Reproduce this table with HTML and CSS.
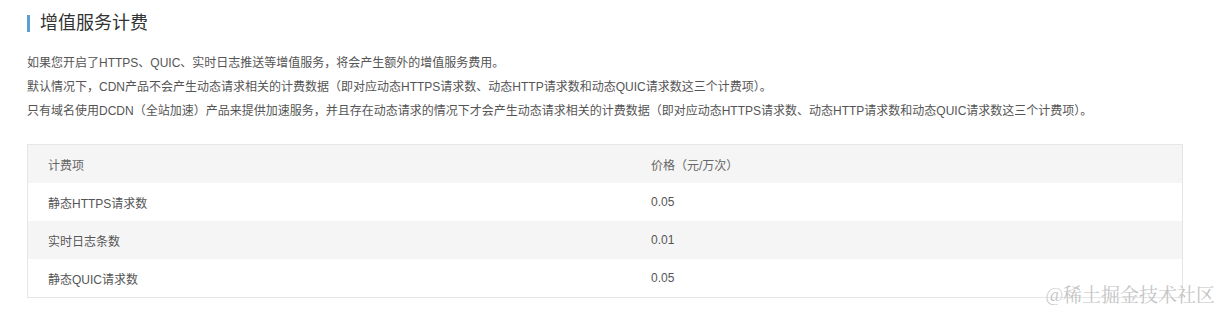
FILE: index.html
```html
<!DOCTYPE html>
<html lang="zh">
<head>
<meta charset="utf-8">
<link rel="stylesheet" href="styles.css">
</head>
<body>
<div class="page">
  <h2 class="title">增值服务计费</h2>
  <div class="desc">
    <p>如果您开启了HTTPS、QUIC、实时日志推送等增值服务，将会产生额外的增值服务费用。</p>
    <p>默认情况下，CDN产品不会产生动态请求相关的计费数据（即对应动态HTTPS请求数、动态HTTP请求数和动态QUIC请求数这三个计费项）。</p>
    <p>只有域名使用DCDN（全站加速）产品来提供加速服务，并且存在动态请求的情况下才会产生动态请求相关的计费数据（即对应动态HTTPS请求数、动态HTTP请求数和动态QUIC请求数这三个计费项）。</p>
  </div>
  <div class="table">
    <div class="row head"><div class="cell">计费项</div><div class="cell">价格（元/万次）</div></div>
    <div class="row"><div class="cell">静态HTTPS请求数</div><div class="cell">0.05</div></div>
    <div class="row alt"><div class="cell">实时日志条数</div><div class="cell">0.01</div></div>
    <div class="row"><div class="cell">静态QUIC请求数</div><div class="cell">0.05</div></div>
  </div>
  <div class="watermark">@稀土掘金技术社区</div>
</div>
</body>
</html>
```
FILE: styles.css
```css
html, body { margin: 0; padding: 0; background: #fff; }
body { font-family: "Liberation Sans", "Noto Sans CJK SC", sans-serif; color: #555; }
.page { position: relative; width: 1221px; height: 310px; padding: 0 38px 0 27px; box-sizing: border-box; }
.title {
  margin: 0; padding: 11px 0 0 13px; font-weight: normal; font-size: 18px; line-height: 24px; color: #333;
  position: relative;
}
.title::before { content: ""; position: absolute; left: 0; top: 15px; width: 3px; height: 17px; background: #5a9fd6; }
.desc { margin-top: 16px; font-size: 12px; line-height: 24px; color: #555; }
.desc p { margin: 0; }
.table { margin-top: 21px; border: 1px solid #e6e6e6; font-size: 12px; color: #555; }
.row { display: grid; grid-template-columns: 603px 1fr; height: 38px; align-items: center; background: #fff; }
.row.head, .row.alt { background: #f5f5f5; }
.row.head { color: #666; }
.cell { padding-left: 20px; }
.watermark {
  position: absolute; right: 6px; bottom: 3px; font-family: "Noto Serif CJK SC", "Liberation Serif", "Noto Sans CJK SC", serif;
  font-size: 19px; color: #c4c4c4;
}
```
